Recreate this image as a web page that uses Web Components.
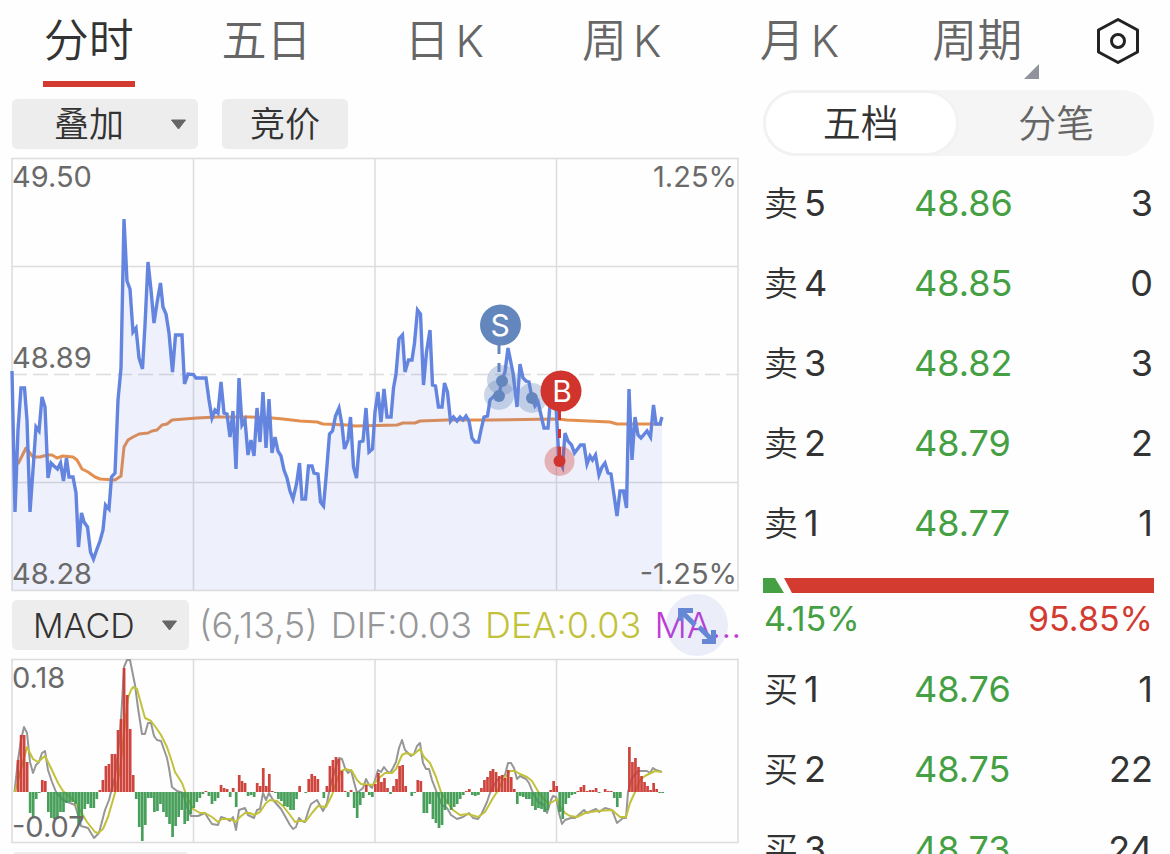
<!DOCTYPE html>
<html lang="zh-CN">
<head>
<meta charset="utf-8">
<meta name="viewport" content="width=device-width, initial-scale=1">
<title>分时</title>
<style>
    body {
        margin: 0;
        background: #fefefe;
        color: #333;
        font-family: Inter, "Noto Sans CJK SC", sans-serif;
        font-weight: 350;
    }
</style>
</head>
<body>
<stock-app></stock-app>

<script>
const PRICE = '12,371 15,512 18,430 21,388 24.5,388 27,420 30,512 33,470 36,427 39,431 42,397 45,407 48,478 51,463 54,466 57.5,469 60.5,463 63.5,481 66.5,458 69,477 73,477 76,493 78.5,547 81.5,513 84,522 87.5,527 90.5,552 93.5,559 97,549 100,541 103,530 105.5,505 109,509 111.5,477 115,473 118,400 121,368 124,219 127,281 130,289 133,332 136,328 139,358 142.5,369 145,325 148,262 151,290 154,323 157,303 160.5,283 163,307 166,314 169,333 172.5,372 175.5,335 182,335 184.5,384 188,374 193.5,374.5 196,378 206,378 209,400 212,418 215,410 218,413 221,382 224,413 227,414 230,437 233,411 236,469 239,378 242,425 245,420 248,455 251,440 254,456 257,408 260,442 263,392 266,448 269,399 272,453 275,437 278,451 281,456 284,470 287,478 290,491 293,499 296.5,484 299.5,463 302,499 305.5,499 308.5,466 312,466 314,473 318,474 320.5,502 323.5,506 326,478 329.5,434 332.5,431 335.5,416 339,408 342,425 344.5,449 348,440 350.5,417 353.5,467 356.5,478 359.5,442 363,441 366,408 369,452 372.5,449 375,412 378,392 381,422 384,389 387,417 391,417 393.5,388 396,374 399,339 402.5,335 405,372 408.5,360 412,360 414.5,343 417.5,310 420.5,314 423.5,385 426.5,352 430,330 432.5,385 435.5,386 438.5,407 442,407 444.5,383 447.5,392 450.5,421 453.5,417 457,421 460,417 463,420 466,416 469,421 472,438 475,442 478.5,442 481,430 484,417 487.5,416 490,400 494,396 499,395 502,380 505,372 508,348 513,373 517,407 520,364 523,378 526,381 529,382 532,398 535,406 538,402 541,415 544,428 548,428 550,405 556,405 559,460 562.5,467 565,433 568,441 571.5,445 574.5,453 580.5,445 584,445 587,464 590,456 592.5,460 595.5,455 599,475 602,467 605,463 608,473 611,474 614,495 617,516 620,491 623.5,491 626.5,508 629,389 632,460 635,417 638,435 641,438 647,431 650.5,437 653.5,405 656,424 660,424 662,417';

const AVERAGE = '18,464 26,448 33,457 40,457 47,455 52,455 57,458 63,456 73,457 77,460 82,469 88,472 95,477 100,479 115,480 121,476 124,447 128,440 133,437 139,434 148,433 152,431 157,430 162,425 167,424 172,420 197,418 217,417 250,417 272,418 283,419 300,421 317,422 323,424 347,425 355,426 397,425 403,423 415,423 420,421 447,420 490,420 557,419 567,420 610,422 617,424 662,424';

const DIF = '14.5,792 18,760 21,740 24,727 27,733 30,762 33,773 36,765 39,762 42,753 45,751 48,770 52,782 56,792 63,800 70,803 75,805 78,815 81,826 88,828 94,838 99,833 105,810 109,800 111,792 115,777 118,753 121,720 124,667 127,660 130,660 135,685 138,708 142,734 145,734 148,723 151,723 154,736 157,740 161,741 167,758 169,768 172,787 177,791 183,793 187,807 191,816 198,816 205,813 208,818 212,824 218,825 221,817 227,819 230,821 233,817 236,830 239,810 242,809 245,808 248,815 254,818 257,810 260,809 263,793 266,800 269,793 273,800 281,809 290,825 293,829 296,827 299,818 302,821 305,822 308,812 311,804 317,800 323,811 327,803 330,787 337,763 339,758 342,759 345,768 348,773 351,770 354,782 357,793 363,788 366,779 369,785 372,788 375,780 378,770 381,772 384,767 387,771 390,773 393,768 396,762 399,748 402,740 405,750 411,756 414,754 417,746 420,743 423,763 426,769 429,769 432,780 437,793 442,805 447,808 451,815 457,819 463,817 469,813 473,818 478,819 482,813 487,802 490,793 497,780 505,775 508,763 511,763 514,768 517,779 520,776 526,779 529,783 533,793 538,802 544,805 547,813 551,800 553,796 556,797 559,813 562,824 565,820 571,818 575,818 584,810 587,813 596,809 599,812 605,808 612,810 617,823 623,818 626,818 628,792 632,778 638,771 647,771 650,773 653,768 656,770 662,772';

const DEA = '15,792 20,773 27,747 30,753 33,759 38,762 45,756 50,766 58,783 63,791 70,797 75,802 80,810 87,822 95,832 98,833 103,829 108,817 115,793 120,770 124,733 128,698 131,690 133,687 137,689 140,700 145,718 151,721 157,729 161,735 167,747 172,762 175,772 182,783 187,797 193,809 200,813 205,813 212,817 218,822 222,819 230,819 236,822 240,817 245,813 250,813 254,815 260,812 266,803 270,800 277,801 283,806 290,815 295,822 299,821 306,821 312,813 318,806 326,807 332,795 337,780 341,771 346,769 352,771 357,780 361,784 373,785 378,779 385,773 392,773 396,769 402,755 406,753 413,755 420,749 424,757 430,763 436,777 441,792 447,802 453,810 460,815 468,814 478,817 485,812 493,798 497,792 503,780 510,771 515,771 520,774 527,777 532,781 539,793 545,800 549,804 557,799 560,807 565,813 570,816 577,817 585,813 597,811 612,810 620,817 626,817 630,803 635,792 640,780 645,776 655,771 662,772';

// Histogram runs: start x and bar values
const BARS = [
    [18, [32, 57, 57, 30, -21, -25, -7, -1, 12, 11, -20, -26, -27, -27, -20, -20, -11, -10, -10, -12, -33, -24, -17, -12, -16, -16, -7, 2, 12, 26, 28, 38, 38, 62, 73, 124, 97, 63, 17, -7, -35, -49, -33, -6, -6, -20, -19, -12, -20, -25, -32, -45, -34, -25, -18, -32, -29, -22, -16, -10, -6, -2, 1, -4, -12, -9, -6, 7, 4, 3, -5, 4, -15, 17]],
    [242, [11, 9, -4, -3, -5, 9, 6, 24, 6, 18, 1, -1, -7, -9, -14, -15, -18, -18, -7, 6, 0, -1, 13, 18, 16, 13, 0, -6, 6, 26, 32, 35, 33, 21, 1, -5, 2, -16, -26, -13, -6, 7, -3, -5, 8, 19, 10, 14, 4, -2, 6, 13, 26, 27, 6, 0, -4, -1, 12, 11, -21, -21, -12, -27, -31, -36, -33, -18, -12, -18, -15, -12, -7, -3, 1, 3, -3, -4, -3, 4, 12, 15, 21]],
    [493, [23, 20, 16, 17, 14, 22, 15, 3, -12, -4, -5, -7, -7, -14, -18, -16, -17, -20, -18, 2, 11, 6, -20, -27, -12, -6, -3, -2, 1, 5, 7, 1, 2, 2, 4, -1, 0, 3, 1, 1, -6, -15, -6, 0, 0, 45, 30, 34, 25, 16, 10, 6, 2, 9, 3, -1, -1]]
];
const BAR_STEP = 3.03;
const ZERO = 792;

const CHART_STYLE = `
    :host { display: block; }
    svg { display: block; width: 100%; overflow: visible; }
    .grid { fill: none; stroke: #dcdcde; stroke-width: 1.5; }
    .line { fill: none; stroke-linejoin: round; }
    text { font-size: 29px; font-weight: 400; fill: #6a6a6a; }
    .end { text-anchor: end; }
`;

class PriceChart extends HTMLElement {
    connectedCallback() {
        this.attachShadow({ mode: 'open' });
        this.shadowRoot.innerHTML = `
            <style>
                ${CHART_STYLE}
                .price { stroke: #6485df; stroke-width: 3.4; stroke-linejoin: miter; }
                .area { fill: rgba(95, 120, 225, 0.1); }
                .average { stroke: #e28f50; stroke-width: 3; }
                .sell { fill: #6386bd; stroke: none; }
                .buy { fill: #d0342c; stroke: none; }
                .halo { fill-opacity: 0.33; }
                .stem { fill: none; stroke-width: 3; stroke-dasharray: 9 9; }
                .badge { font-size: 30px; fill: #fff; text-anchor: middle; }
            </style>
            <svg viewBox="12 158 726 433" role="img" aria-label="分时走势">
                <path class="grid" d="M12 158.500H738V590.500H12ZM12 266.500H738M12 482.500H738M193.500 158V590M375 158V590M556.500 158V590"/>
                <path class="grid" stroke-dasharray="15 6" d="M12 374.500H738"/>
                <polyline class="line average" points="${AVERAGE}"/>
                <polygon class="area" points="${PRICE} 662,590 12,590"/>
                <polyline class="line price" points="${PRICE}"/>
                <g class="sell">
                    <circle class="halo" cx="499" cy="395" r="15"/>
                    <circle class="halo" cx="502" cy="380" r="15"/>
                    <circle class="halo" cx="532" cy="398" r="15"/>
                    <circle cx="499" cy="396" r="6"/>
                    <circle cx="502" cy="381" r="6"/>
                    <circle cx="532" cy="398" r="6"/>
                    <path class="stem" stroke="#6386bd" d="M499 345V372"/>
                    <circle cx="500.500" cy="325" r="20.500"/>
                </g>
                <g class="buy">
                    <circle class="halo" cx="559.500" cy="461" r="15"/>
                    <path class="stem" stroke="#d0342c" d="M559.500 411V461"/>
                    <circle cx="559.500" cy="461" r="6"/>
                    <circle cx="561" cy="391" r="20.500"/>
                </g>
                <text class="badge" x="500" y="336">S</text>
                <text class="badge" x="562" y="402">B</text>
                <text x="12" y="187">49.50</text>
                <text x="12" y="368">48.89</text>
                <text x="12" y="584">48.28</text>
                <text class="end" x="737" y="187">1.25%</text>
                <text class="end" x="737" y="584">-1.25%</text>
            </svg>
        `;
    }
}

class MacdChart extends HTMLElement {
    connectedCallback() {
        const bars = BARS.map(([start, values]) => values.map((v, i) => {
            const x = (start + i * BAR_STEP - 1.3).toFixed(2);
            const y = v > 0 ? ZERO - v : ZERO;
            return `<rect class="${v > 0 ? 'up' : 'down'}" x="${x}" y="${y}" width="2.7" height="${Math.abs(v)}"/>`;
        }).join('')).join('');

        this.attachShadow({ mode: 'open' });
        this.shadowRoot.innerHTML = `
            <style>
                ${CHART_STYLE}
                .dif { stroke: #969696; stroke-width: 2; }
                .dea { stroke: #c2c23a; stroke-width: 2; }
                .bars { opacity: 0.94; }
                .up { fill: #cc3a33; }
                .down { fill: #3d9a50; }
            </style>
            <svg viewBox="12 659 726 184" role="img" aria-label="MACD">
                <path class="grid" d="M12 659.500H738V842.500H12ZM193.500 659V842M375 659V842M556.500 659V842"/>
                <polyline class="line dif" points="${DIF}"/>
                <polyline class="line dea" points="${DEA}"/>
                <g class="bars">${bars}</g>
                <text x="12" y="688">0.18</text>
                <text x="12" y="837">-0.07</text>
            </svg>
        `;
    }
}

class PeriodTabs extends HTMLElement {
    connectedCallback() {
        this.attachShadow({ mode: 'open' });
        this.shadowRoot.innerHTML = `
            <style>
                :host { display: block; }
                nav {
                    display: grid;
                    grid-template-columns: repeat(6, 1fr) 104px;
                    justify-items: center;
                    height: 90px;
                }
                button {
                    border: 0;
                    padding: 0;
                    background: none;
                    font: inherit;
                    color: inherit;
                }
                .tab {
                    position: relative;
                    height: 87px;
                    padding: 0 1px;
                    box-sizing: border-box;
                    border-bottom: 6px solid transparent;
                    font-size: 45px;
                    line-height: 80px;
                    color: #666;
                    white-space: nowrap;
                }
                .tab[aria-current] {
                    color: #333;
                    border-color: #d33b31;
                }
                .tab span { margin-left: 6px; font-size: 44px; }
                .more::after {
                    content: "";
                    position: absolute;
                    right: -16px;
                    top: 64px;
                    border-left: 15px solid transparent;
                    border-bottom: 15px solid #90939b;
                }
                .settings { height: 82px; }
                .settings svg { display: block; }
            </style>
            <nav>
                <button class="tab" aria-current="true">分时</button>
                <button class="tab">五日</button>
                <button class="tab">日<span>K</span></button>
                <button class="tab">周<span>K</span></button>
                <button class="tab">月<span>K</span></button>
                <button class="tab more">周期</button>
                <button class="settings" aria-label="设置">
                    <svg width="44" height="48" viewBox="0 0 44 48" fill="none" stroke="#222" stroke-width="3" stroke-linejoin="round">
                        <path d="M22 2.500L41.500 13V35L22 45.500L2.500 35V13Z"/>
                        <circle cx="22" cy="24" r="6.500"/>
                    </svg>
                </button>
            </nav>
        `;
    }
}

class PickBox extends HTMLElement {
    connectedCallback() {
        this.attachShadow({ mode: 'open' });
        this.shadowRoot.innerHTML = `
            <style>
                :host { display: block; position: relative; flex: none; }
                select {
                    appearance: none;
                    display: block;
                    width: 100%;
                    height: 50px;
                    margin: 0;
                    border: 0;
                    border-radius: 5px;
                    padding: 0 0 0 var(--inset, 42px);
                    background: #ededed;
                    color: #333;
                    font: inherit;
                    font-size: var(--size, 35px);
                }
                svg {
                    position: absolute;
                    right: 11px;
                    top: 20px;
                    pointer-events: none;
                }
            </style>
            <select aria-label="${this.getAttribute('label')}">
                <option>${this.getAttribute('value')}</option>
            </select>
            <svg width="17" height="12" viewBox="0 0 17 12"><path d="M1.500 1H15.500L8.500 10Z" fill="#666" stroke="#666" stroke-linejoin="round"/></svg>
        `;
    }
}

class BookSwitch extends HTMLElement {
    connectedCallback() {
        this.attachShadow({ mode: 'open' });
        this.shadowRoot.innerHTML = `
            <style>
                :host { display: block; }
                div {
                    display: grid;
                    grid-template-columns: 1fr 1fr;
                    height: 66px;
                    border-radius: 33px;
                    background: #f5f5f5;
                }
                button {
                    border: 3px solid transparent;
                    border-radius: 33px;
                    padding: 0;
                    background: none;
                    color: #666;
                    font: inherit;
                    font-size: 38px;
                    line-height: 60px;
                }
                .on {
                    background: #fff;
                    border-color: #f2f2f2;
                    color: #333;
                }
            </style>
            <div>
                <button class="on">五档</button>
                <button>分笔</button>
            </div>
        `;
    }
}

class OrderSide extends HTMLElement {
    connectedCallback() {
        const name = this.getAttribute('name');
        const rows = this.getAttribute('rows').split(';').map(row => {
            const [level, price, volume] = row.split(',');
            return `
                <tr>
                    <th scope="row">${name}<span>${level}</span></th>
                    <td class="price">${price}</td>
                    <td class="volume">${volume}</td>
                </tr>`;
        }).join('');

        this.attachShadow({ mode: 'open' });
        this.shadowRoot.innerHTML = `
            <style>
                :host { display: block; }
                table {
                    width: 100%;
                    border-collapse: collapse;
                    table-layout: fixed;
                    font-size: 36px;
                    font-weight: 400;
                    line-height: 50px;
                }
                th, td { padding: 0; height: 80px; vertical-align: middle; }
                th {
                    width: 151px;
                    padding-left: 1px;
                    box-sizing: border-box;
                    text-align: left;
                    font-size: 34px;
                    font-weight: 350;
                }
                th span { margin-left: 6px; font-size: 36px; font-weight: 400; }
                .price { color: #45a043; }
                .volume { width: 100px; padding-right: 1px; text-align: right; }
            </style>
            <table>${rows}</table>
        `;
    }
}

class RatioBar extends HTMLElement {
    connectedCallback() {
        this.attachShadow({ mode: 'open' });
        this.shadowRoot.innerHTML = `
            <style>
                :host { display: block; }
                .bar { display: flex; height: 15px; }
                .buy {
                    width: 21px;
                    background: #45a043;
                    clip-path: polygon(0 0, 12px 0, 100% 100%, 0 100%);
                }
                .sell {
                    flex: 1;
                    background: #d33b31;
                    clip-path: polygon(0 0, 100% 0, 100% 100%, 8px 100%);
                }
                p {
                    display: flex;
                    justify-content: space-between;
                    margin: 0;
                    padding: 0 1px;
                    font-size: 34px;
                    font-weight: 400;
                    line-height: 52px;
                    color: #45a043;
                }
                p span:last-child { color: #d33b31; }
            </style>
            <div class="bar"><div class="buy"></div><div class="sell"></div></div>
            <p><span>4.15%</span><span>95.85%</span></p>
        `;
    }
}

class StockApp extends HTMLElement {
    connectedCallback() {
        this.attachShadow({ mode: 'open' });
        this.shadowRoot.innerHTML = `
            <style>
                :host { display: block; height: 100vh; overflow: hidden; }
                main {
                    display: grid;
                    grid-template-columns: minmax(0, 1fr) 391px;
                    gap: 25px;
                    padding: 0 16px 0 12px;
                }
                .charts {
                    display: flex;
                    flex-direction: column;
                    gap: 9px;
                    padding-top: 9px;
                }
                .tools {
                    position: relative;
                    display: flex;
                    align-items: center;
                    gap: 24px;
                    height: 50px;
                }
                .overlay { width: 186px; }
                .auction {
                    width: 126px;
                    height: 50px;
                    border: 0;
                    border-radius: 5px;
                    padding: 0;
                    background: #ededed;
                    color: #333;
                    font: inherit;
                    font-size: 35px;
                    line-height: 50px;
                }
                .index {
                    width: 177px;
                    --inset: 21px;
                    --size: 34px;
                }
                .legend { gap: 10px; }
                .values {
                    display: flex;
                    gap: 13px;
                    font-size: 36px;
                    line-height: 50px;
                    white-space: nowrap;
                    color: #969799;
                }
                .dea { color: #c2c23a; }
                .macd { color: #c03ad6; }
                .expand {
                    position: absolute;
                    right: 10px;
                    top: -6px;
                    width: 62px;
                    height: 62px;
                    border: 0;
                    border-radius: 50%;
                    padding: 0;
                    background: rgba(95, 120, 215, 0.12);
                }
                .expand svg { display: block; }
                .book { display: flex; flex-direction: column; }
                .asks { margin: 7px 0 15px; }
                .bids { margin-top: 4px; }
            </style>
            <period-tabs></period-tabs>
            <main>
                <section class="charts">
                    <div class="tools">
                        <pick-box class="overlay" label="叠加" value="叠加"></pick-box>
                        <button class="auction">竞价</button>
                    </div>
                    <price-chart></price-chart>
                    <div class="tools legend">
                        <pick-box class="index" label="指标" value="MACD"></pick-box>
                        <div class="values">
                            <span>(6,13,5)</span>
                            <span>DIF:0.03</span>
                            <span class="dea">DEA:0.03</span>
                            <span class="macd">MA...</span>
                        </div>
                        <button class="expand" aria-label="全屏">
                            <svg width="62" height="62" viewBox="0 0 62 62" fill="none" stroke="#6688d4" stroke-width="5">
                                <path d="M14.500 27V16.500H27M16 18L29 31M33 33L47 47M47.500 36V47.500H36"/>
                            </svg>
                        </button>
                    </div>
                    <macd-chart></macd-chart>
                    <div class="tools">
                        <pick-box class="index" label="副图指标" value="成交量"></pick-box>
                    </div>
                </section>
                <section class="book">
                    <book-switch></book-switch>
                    <order-side class="asks" name="卖" rows="5,48.86,3;4,48.85,0;3,48.82,3;2,48.79,2;1,48.77,1"></order-side>
                    <ratio-bar></ratio-bar>
                    <order-side class="bids" name="买" rows="1,48.76,1;2,48.75,22;3,48.73,24"></order-side>
                </section>
            </main>
        `;
    }
}

customElements.define('price-chart', PriceChart);
customElements.define('macd-chart', MacdChart);
customElements.define('period-tabs', PeriodTabs);
customElements.define('pick-box', PickBox);
customElements.define('book-switch', BookSwitch);
customElements.define('order-side', OrderSide);
customElements.define('ratio-bar', RatioBar);
customElements.define('stock-app', StockApp);
</script>
</body>
</html>
